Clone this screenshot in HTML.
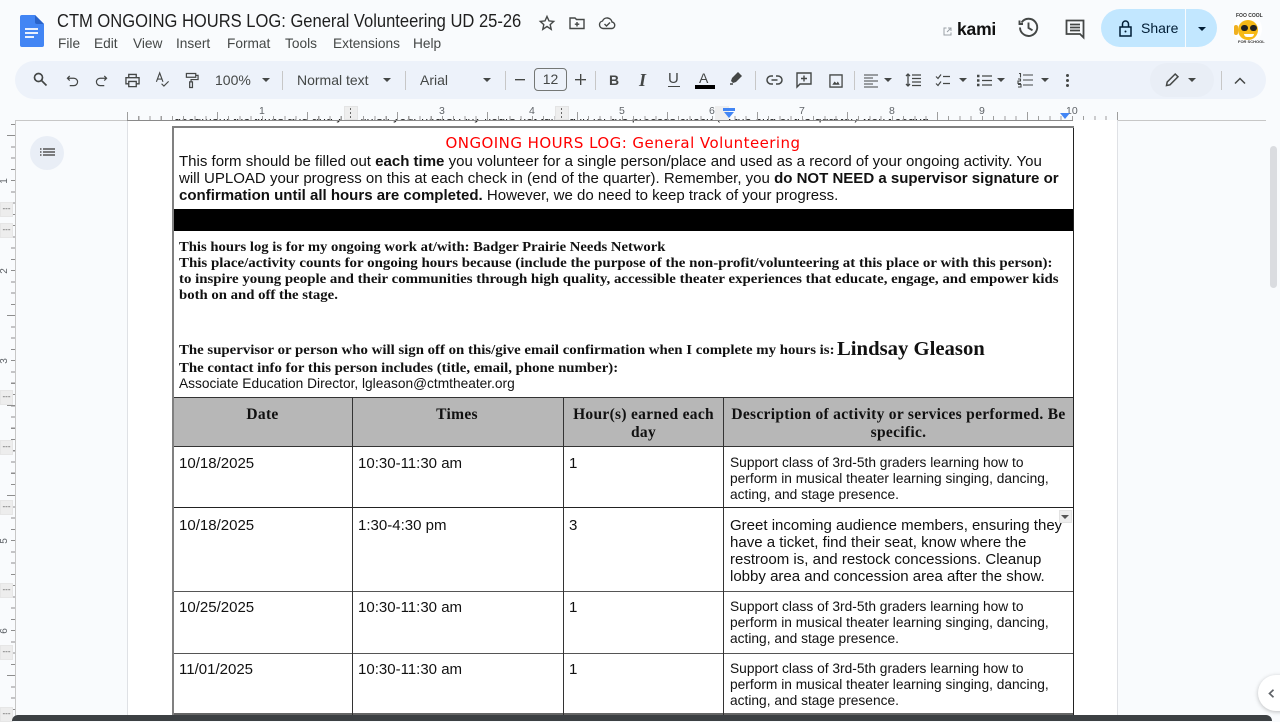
<!DOCTYPE html>
<html><head><meta charset="utf-8"><title>CTM ONGOING HOURS LOG</title>
<style>
*{box-sizing:border-box}
html,body{margin:0;padding:0;width:1280px;height:719px;overflow:hidden;background:#f9fbfd;font-family:"Liberation Sans",sans-serif;color:#000}
body{fill:none;stroke:#444746;stroke-width:1.5}
.a{position:absolute}
.t{position:absolute;white-space:nowrap}
.ui{color:#444746;font-size:13.7px;line-height:18px}
.ic{position:absolute;overflow:visible}
.sep{position:absolute;top:71px;width:1px;height:19px;background:#c7c7c7}
.caret{position:absolute;width:0;height:0;border-left:4px solid transparent;border-right:4px solid transparent;border-top:4px solid #444746}
.d{font-size:15.03px;line-height:17px;color:#111}
.s{font-family:"Liberation Serif",serif;font-weight:bold;font-size:14px;line-height:16px;color:#111;transform-origin:0 0}
.h{font-family:"Liberation Serif",serif;font-weight:bold;font-size:15.5px;line-height:18px;text-align:center;color:#111;letter-spacing:.3px}
.c{font-size:13.75px;line-height:16px;color:#111}
.hl{position:absolute;background:#333}
.rn{position:absolute;font-size:10.5px;color:#5f6368;line-height:12px}
.vh{position:absolute;left:0;width:13px;height:15px;background:#ededed;border:1px solid #e6e6e6;color:#555;font-size:8px;line-height:11px;text-align:center}
.rv{position:absolute;left:0;width:12px;font-size:10px;line-height:12px;color:#5f6368;transform:rotate(-90deg);text-align:center}
</style></head><body>

<!-- Docs logo -->
<svg class="a" style="left:20px;top:15px" width="24" height="32" viewBox="0 0 24 32" stroke="none"><path d="M2 0H15L24 9V30a2 2 0 0 1-2 2H2a2 2 0 0 1-2-2V2a2 2 0 0 1 2-2z" fill="#4285f4"/><path d="M15 0L24 9H17a2 2 0 0 1-2-2z" fill="#2a63c9"/><path d="M5 14h13M5 18h13M5 22h9" stroke="#fff" stroke-width="1.7"/></svg>

<div class="t" style="left:57px;top:10px;font-size:18px;line-height:23px;color:#1f1f1f;transform:scaleX(.919);transform-origin:0 0">CTM ONGOING HOURS LOG: General Volunteering UD 25-26</div>
<svg class="ic" style="left:539px;top:15px" width="16" height="16" viewBox="0 0 16 16" stroke-width="1.400"><path d="M8 1.500l2 4.400 4.700.5-3.500 3.200 1 4.700L8 11.500l-4.200 2.800 1-4.700L1.300 6.400l4.700-.5z"/></svg>
<svg class="ic" style="left:569px;top:16px" width="16" height="14" viewBox="0 0 16 14" stroke-width="1.400"><path d="M1 2h5l1.500 1.500H15V12.500H1zM8 6v4.500M5.800 8.200h4.500"/></svg>
<svg class="ic" style="left:598px;top:16px" width="18" height="14" viewBox="0 0 18 14" stroke-width="1.400"><path d="M5 12.500a3.800 3.800 0 0 1-.5-7.500 5 5 0 0 1 9.500 1 3.300 3.300 0 0 1 0 6.500zM6.500 8l2 2 3.500-3.500"/></svg>

<div class="t ui" style="left:58px;top:35px">File</div>
<div class="t ui" style="left:94px;top:35px">Edit</div>
<div class="t ui" style="left:133px;top:35px">View</div>
<div class="t ui" style="left:176px;top:35px">Insert</div>
<div class="t ui" style="left:227px;top:35px">Format</div>
<div class="t ui" style="left:285px;top:35px">Tools</div>
<div class="t ui" style="left:333px;top:35px">Extensions</div>
<div class="t ui" style="left:413px;top:35px">Help</div>

<!-- top right -->
<svg class="ic" style="left:943px;top:27px" width="9" height="9" viewBox="0 0 9 9" stroke="#9aa0a6" stroke-width="1"><path d="M3.500 1H1V8H8V5.500M5 1H8V4M8 1L4 5"/></svg>
<div class="t" style="left:957px;top:19px;font-size:17.500px;font-weight:bold;line-height:20px;color:#111;letter-spacing:-.2px">kami</div>
<svg class="ic" style="left:1018px;top:17px" width="21" height="21" viewBox="0 0 21 21" stroke-width="1.900"><path d="M3.500 5.500A8.600 8.600 0 1 1 2 10.500M1.500 3.500v3.500h3.500M10.500 5.500v5.500l4 2.300"/></svg>
<svg class="ic" style="left:1065px;top:19px" width="20" height="20" viewBox="0 0 20 20" stroke-width="1.800"><path d="M1.500 1.500h17v17l-3.500-3.500H1.500zM5 5.500h10M5 8.500h10M5 11.500h10"/></svg>
<div class="a" style="left:1101px;top:9px;width:116px;height:38px;border-radius:19px;background:#c2e7ff"></div>
<div class="a" style="left:1185px;top:9px;width:1px;height:38px;background:#f9fbfd"></div>
<svg class="ic" style="left:1118px;top:20px" width="15" height="17" viewBox="0 0 15 17" stroke="#001d35" stroke-width="1.500"><path d="M2 7h11v9H2zM4.500 7V4a3 3 0 0 1 6 0v3"/><circle cx="7.500" cy="11.500" r="1" fill="#001d35" stroke="none"/></svg>
<div class="t" style="left:1141px;top:19px;font-size:14px;line-height:18px;color:#001d35">Share</div>
<div class="caret" style="left:1198px;top:27px;border-top-color:#001d35"></div>
<div class="a" style="left:1233px;top:14px;width:29px;height:30px;border-radius:50%;background:#fff"></div>
<div class="a" style="left:1238px;top:20px;width:20px;height:20px;border-radius:50%;background:#f6b916"></div>
<div class="a" style="left:1241px;top:25px;width:7px;height:6px;border-radius:3px;background:#222"></div>
<div class="a" style="left:1250px;top:25px;width:7px;height:6px;border-radius:3px;background:#222"></div>
<div class="a" style="left:1234px;top:25px;width:4px;height:10px;border-radius:2px;background:#f0b020"></div>
<div class="a" style="left:1244px;top:34px;width:10px;height:3px;border-radius:0 0 5px 5px;background:#fff"></div>
<div class="t" style="left:1236px;top:13px;font-size:5px;line-height:6px;font-weight:bold;color:#333">FOO COOL</div>
<div class="t" style="left:1238px;top:39px;font-size:4px;line-height:5px;font-weight:bold;color:#333">FOR SCHOOL</div>

<!-- toolbar -->
<div class="a" style="left:15px;top:61px;width:1251px;height:38px;border-radius:19px;background:#edf2fa"></div>
<svg class="ic" style="left:33px;top:72px" width="15" height="15" viewBox="0 0 15 15" stroke-width="1.700"><circle cx="5.500" cy="5.500" r="4"/><path d="M8.500 8.500l5 5"/></svg>
<svg class="ic" style="left:66px;top:75px" width="13" height="12" viewBox="0 0 14 13" stroke-width="1.300"><path d="M4 1L1.500 3.500 4 6M2 3.500H8.500a4 4 0 0 1 0 8H4"/></svg>
<svg class="ic" style="left:95px;top:75px" width="13" height="12" viewBox="0 0 14 13" stroke-width="1.300"><path d="M10 1l2.500 2.500L10 6M12 3.500H5.500a4 4 0 0 0 0 8H10"/></svg>
<svg class="ic" style="left:125px;top:73px" width="15" height="15" viewBox="0 0 16 15" stroke-width="1.400"><path d="M4 4V1h8v3M4 11H1V4.500h14V11h-3M4 8.500h8V14H4z"/></svg>
<svg class="ic" style="left:155px;top:71px" width="15" height="17" viewBox="0 0 16 17" stroke-width="1.200"><path d="M1.500 11L5 1.500 8.500 11M2.800 8h4.500M7 13l2.500 2.500 5-5"/></svg>
<svg class="ic" style="left:185px;top:72px" width="14" height="17" viewBox="0 0 15 17" stroke-width="1.300"><path d="M1.500 1h10v4h-10zM11.500 3h2.500v4.500H6.500V10M5 10h3v6H5z"/></svg>
<div class="t ui" style="left:215px;top:71px;font-size:14px">100%</div>
<div class="caret" style="left:262px;top:78px"></div>
<div class="sep" style="left:282px"></div>
<div class="t ui" style="left:297px;top:71px;font-size:14px">Normal text</div>
<div class="caret" style="left:383px;top:78px"></div>
<div class="sep" style="left:405px"></div>
<div class="t ui" style="left:420px;top:71px;font-size:14px">Arial</div>
<div class="caret" style="left:483px;top:78px"></div>
<div class="sep" style="left:505px"></div>
<div class="a" style="left:515px;top:79px;width:10px;height:1px;background:#444746;box-shadow:0 .5px 0 #777"></div>
<div class="a" style="left:534px;top:68px;width:33px;height:23px;border:1px solid #747775;border-radius:4px;color:#444746;font-size:14px;line-height:21px;text-align:center">12</div>
<div class="a" style="left:575px;top:79px;width:11px;height:1px;background:#444746;box-shadow:0 .5px 0 #777"></div>
<div class="a" style="left:580px;top:74px;width:1px;height:11px;background:#444746;box-shadow:.5px 0 0 #777"></div>
<div class="sep" style="left:595px"></div>
<div class="t" style="left:609px;top:71px;font-size:14px;line-height:18px;font-weight:bold;color:#444746">B</div>
<div class="t" style="left:639px;top:70px;font-family:'Liberation Serif',serif;font-size:18px;line-height:20px;font-weight:bold;font-style:italic;color:#444746">I</div>
<div class="t" style="left:668px;top:70px;font-size:15px;line-height:18px;color:#444746">U</div>
<div class="a" style="left:668px;top:86px;width:12px;height:1px;background:#444746"></div>
<div class="t" style="left:699px;top:69px;font-size:14px;line-height:18px;color:#444746">A</div>
<div class="a" style="left:695px;top:85px;width:20px;height:4px;background:#000"></div>
<svg class="a" style="left:729px;top:70px" width="16" height="15" viewBox="0 0 16 15"><path d="M2 11l1-3 6-6 4 4-6 6-3 1z" fill="#444746" stroke="none"/><path d="M1 14h3" stroke="#444746"/></svg>
<div class="sep" style="left:755px"></div>
<svg class="ic" style="left:766px;top:75px" width="17" height="10" viewBox="0 0 17 10"><path d="M7 1H5a4 4 0 0 0 0 8h2M10 1h2a4 4 0 0 1 0 8h-2M5.500 5h6"/></svg>
<svg class="ic" style="left:796px;top:72px" width="16" height="16" viewBox="0 0 16 16" stroke-width="1.400"><path d="M1 1h14v11H4l-3 3zM8 3.500v6M5 6.500h6"/></svg>
<svg class="ic" style="left:829px;top:74px" width="14" height="14" viewBox="0 0 15 15" stroke-width="1.400"><path d="M1 1h13v13H1z"/><path d="M3.500 11.500L6 8l2 2 1.500-2 2 3.500z" fill="#444746" stroke="none"/></svg>
<div class="sep" style="left:854px"></div>
<svg class="ic" style="left:864px;top:74px" width="14" height="13" viewBox="0 0 14 13" stroke-width="1.100"><path d="M0 1h14M0 4h9M0 7h14M0 10h9M0 13h14"/></svg>
<div class="caret" style="left:884px;top:78px"></div>
<svg class="ic" style="left:905px;top:73px" width="16" height="14" viewBox="0 0 16 14" stroke-width="1.300"><path d="M7 2h9M7 5.500h9M7 9h9M7 12.500h9M3 1v12M1 3l2-2 2 2M1 11l2 2 2-2"/></svg>
<svg class="ic" style="left:935px;top:73px" width="15" height="14" viewBox="0 0 15 14" stroke-width="1.200"><path d="M1 3.500l2 2 3-4M1 10.500l2 2 3-4M8 3.500h7M8 10.500h7"/></svg>
<div class="caret" style="left:959px;top:78px"></div>
<svg class="ic" style="left:977px;top:74px" width="15" height="13" viewBox="0 0 15 13" stroke-width="1.200"><path d="M5 2h10M5 6.500h10M5 11h10"/><path d="M0 2h2.500M0 6.500h2.500M0 11h2.500" stroke-width="2.500"/></svg>
<div class="caret" style="left:997px;top:78px"></div>
<svg class="ic" style="left:1018px;top:73px" width="15" height="14" viewBox="0 0 15 14" stroke-width="1.100"><path d="M5 2h10M5 7h10M5 12h10M1 .5h1.500v4M0 6h2.500v2H0v2.500h3M0 11.500h3v2.500H0"/></svg>
<div class="caret" style="left:1041px;top:78px"></div>
<div class="a" style="left:1066px;top:74px;width:3px;height:3px;border-radius:50%;background:#444746;box-shadow:0 5px 0 #444746,0 10px 0 #444746"></div>
<div class="a" style="left:1150px;top:63px;width:64px;height:34px;border-radius:17px;background:#e9eef6"></div>
<svg class="ic" style="left:1165px;top:72px" width="15" height="15" viewBox="0 0 15 15"><path d="M1.500 13.500l.7-3.500 8-8 2.800 2.800-8 8z"/></svg>
<div class="caret" style="left:1188px;top:78px"></div>
<div class="sep" style="left:1221px"></div>
<svg class="ic" style="left:1234px;top:77px" width="12" height="8" viewBox="0 0 12 8" stroke-width="1.500"><path d="M1 6.500l5-5 5 5"/></svg>

<!-- document area -->
<div class="a" style="left:127px;top:120px;width:991px;height:600px;background:#fff;border-left:1px solid #dfe1e5;border-right:1px solid #dfe1e5"></div>
<div class="a" style="left:15px;top:120px;width:1px;height:600px;background:#c7c7c7"></div>
<div class="a" style="left:15px;top:120px;width:112px;height:1px;background:#c7c7c7"></div>
<div class="a" style="left:1118px;top:120px;width:148px;height:1px;background:#c7c7c7"></div>
<div class="a" style="left:30px;top:136px;width:34px;height:34px;border-radius:50%;background:#e9eef6"></div>
<svg class="ic" style="left:40px;top:148px" width="15" height="10" viewBox="0 0 15 10" stroke-width="1.400" stroke="#555"><path d="M3 1h12M3 4h12M3 7h12M0 1h1.500M0 4h1.500M0 7h1.500"/></svg>

<!-- clipped text under ruler -->
<div class="a" style="left:127px;top:119px;width:990px;height:5px;overflow:hidden"><div class="t" style="left:47px;top:-11px;font-size:12.6px;line-height:17px;color:#222">document the times and and you finish your hours! Any hours not turned in for the process check (at the end of the quarter) won't count.</div></div>

<!-- ruler top -->
<div class="a" style="left:127px;top:116px;width:991px;height:4px;background:repeating-linear-gradient(90deg,#9e9e9e 0 1px,transparent 1px 11.25px)"></div>
<div class="a" style="left:127px;top:112px;width:991px;height:8px;background:repeating-linear-gradient(90deg,#9e9e9e 0 1px,transparent 1px 90px)"></div>
<div class="a" style="left:127px;top:120px;width:946px;height:1px;background:#8a8a8a"></div>
<div class="rn" style="left:259px;top:105px">1</div>
<div class="rn" style="left:439px;top:105px">3</div>
<div class="rn" style="left:529px;top:105px">4</div>
<div class="rn" style="left:619px;top:105px">5</div>
<div class="rn" style="left:709px;top:105px">6</div>
<div class="rn" style="left:799px;top:105px">7</div>
<div class="rn" style="left:889px;top:105px">8</div>
<div class="rn" style="left:979px;top:105px">9</div>
<div class="rn" style="left:1066px;top:105px">10</div>
<div class="a" style="left:344px;top:106px;width:14px;height:14px;background:#eee;border:1px solid #e4e4e4"></div>
<div class="a" style="left:350px;top:108px;width:1px;height:10px;background:repeating-linear-gradient(#666 0 2px,transparent 2px 4px)"></div>
<div class="a" style="left:555px;top:106px;width:14px;height:14px;background:#eee;border:1px solid #e4e4e4"></div>
<div class="a" style="left:561px;top:108px;width:1px;height:10px;background:repeating-linear-gradient(#666 0 2px,transparent 2px 4px)"></div>
<div class="a" style="left:715px;top:106px;width:14px;height:14px;background:#eee"></div>
<div class="a" style="left:723px;top:108px;width:12px;height:3px;background:#4285f4"></div>
<div class="a" style="left:724px;top:112px;width:0;height:0;border-left:5px solid transparent;border-right:5px solid transparent;border-top:6px solid #4285f4"></div>
<div class="a" style="left:1060px;top:113px;width:0;height:0;border-left:5px solid transparent;border-right:5px solid transparent;border-top:6px solid #4285f4"></div>

<!-- ruler left -->
<div class="a" style="left:11px;top:124px;width:4px;height:591px;background:repeating-linear-gradient(180deg,#8e8e8e 0 1px,transparent 1px 11.25px)"></div>
<div class="a" style="left:7px;top:135px;width:8px;height:580px;background:repeating-linear-gradient(180deg,#8e8e8e 0 1px,transparent 1px 90px)"></div>
<div class="rv" style="left:-1px;top:175px">1</div>
<div class="rv" style="left:-1px;top:265px">2</div>
<div class="rv" style="left:-1px;top:355px">3</div>
<div class="rv" style="left:-1px;top:535px">5</div>
<div class="rv" style="left:-1px;top:625px">6</div>
<div class="vh" style="top:202px">---</div>
<div class="vh" style="top:223px">---</div>
<div class="vh" style="top:390px">---</div>
<div class="vh" style="top:440px">---</div>
<div class="vh" style="top:500px">---</div>
<div class="vh" style="top:583px">---</div>
<div class="vh" style="top:645px">---</div>
<div class="vh" style="top:707px">---</div>

<!-- document table -->
<div class="a" style="left:173px;top:209px;width:900px;height:22px;background:#000"></div>
<div class="a" style="left:173px;top:397px;width:900px;height:50px;background:#b7b7b7"></div>

<div class="hl" style="left:172px;top:126px;width:2px;height:590px;background:#808080"></div>
<div class="hl" style="left:1073px;top:127px;width:1px;height:589px;background:#222"></div>
<div class="hl" style="left:172px;top:126px;width:902px;height:2px;background:#808080"></div>
<div class="hl" style="left:174px;top:397px;width:899px;height:1px"></div>
<div class="hl" style="left:174px;top:446px;width:899px;height:1px"></div>
<div class="hl" style="left:174px;top:507px;width:899px;height:1px;background:#222"></div>
<div class="hl" style="left:174px;top:591px;width:899px;height:1px;background:#555"></div>
<div class="hl" style="left:174px;top:653px;width:899px;height:1px;background:#555"></div>
<div class="hl" style="left:174px;top:713px;width:899px;height:2px;background:#666"></div>
<div class="hl" style="left:352px;top:397px;width:1px;height:318px"></div>
<div class="hl" style="left:563px;top:397px;width:1px;height:318px"></div>
<div class="hl" style="left:723px;top:397px;width:1px;height:318px"></div>

<div class="t" style="left:173px;top:134px;width:900px;text-align:center;font-family:'DejaVu Sans',sans-serif;font-size:15px;line-height:18px;color:#f00;letter-spacing:.45px">ONGOING HOURS LOG: General Volunteering</div>
<div class="t d" style="left:179px;top:153px">This form should be filled out <b>each time</b> you volunteer for a single person/place and used as a record of your ongoing activity. You</div>
<div class="t d" style="left:179px;top:170px">will UPLOAD your progress on this at each check in (end of the quarter). Remember, you <b>do NOT NEED a supervisor signature or</b></div>
<div class="t d" style="left:179px;top:187px"><b>confirmation until all hours are completed.</b> However, we do need to keep track of your progress.</div>

<div class="t s" style="left:179px;top:240px;transform:scaleX(1.047)">This hours log is for my ongoing work at/with: Badger Prairie Needs Network</div>
<div class="t s" style="left:179px;top:256px;transform:scaleX(1.067)">This place/activity counts for ongoing hours because (include the purpose of the non-profit/volunteering at this place or with this person):</div>
<div class="t s" style="left:179px;top:272px;transform:scaleX(1.062)">to inspire young people and their communities through high quality, accessible theater experiences that educate, engage, and empower kids</div>
<div class="t s" style="left:179px;top:288px;transform:scaleX(1.053)">both on and off the stage.</div>
<div class="t s" style="left:179px;top:343px;transform:scaleX(1.059)">The supervisor or person who will sign off on this/give email confirmation when I complete my hours is:</div>
<div class="t s" style="left:837px;top:338px;font-size:20px;line-height:22px;transform:scaleX(1.035)">Lindsay Gleason</div>
<div class="t s" style="left:179px;top:361px;transform:scaleX(1.058)">The contact info for this person includes (title, email, phone number):</div>
<div class="t" style="left:179px;top:375px;font-size:13.73px;line-height:17px;color:#111">Associate Education Director, lgleason@ctmtheater.org</div>

<div class="t h" style="left:173px;top:406px;width:179px">Date</div>
<div class="t h" style="left:353px;top:406px;width:208px">Times</div>
<div class="t h" style="left:564px;top:406px;width:159px">Hour(s) earned each<br>day</div>
<div class="t h" style="left:724px;top:406px;width:349px">Description of activity or services performed. Be<br>specific.</div>

<div class="t d" style="left:179px;top:455px">10/18/2025</div><div class="t d" style="left:358px;top:455px">10:30-11:30 am</div><div class="t d" style="left:569px;top:455px">1</div>
<div class="t c" style="left:730px;top:455px">Support class of 3rd-5th graders learning how to<br>perform in musical theater learning singing, dancing,<br>acting, and stage presence.</div>

<div class="t d" style="left:179px;top:517px">10/18/2025</div><div class="t d" style="left:358px;top:517px">1:30-4:30 pm</div><div class="t d" style="left:569px;top:517px">3</div>
<div class="t d" style="left:730px;top:517px">Greet incoming audience members, ensuring they<br>have a ticket, find their seat, know where the<br>restroom is, and restock concessions. Cleanup<br>lobby area and concession area after the show.</div>
<div class="a" style="left:1059px;top:510px;width:13px;height:13px;background:#eee;border:1px solid #e2e2e2"></div>
<div class="caret" style="left:1061px;top:515px;border-top-color:#555"></div>

<div class="t d" style="left:179px;top:599px">10/25/2025</div><div class="t d" style="left:358px;top:599px">10:30-11:30 am</div><div class="t d" style="left:569px;top:599px">1</div>
<div class="t c" style="left:730px;top:599px">Support class of 3rd-5th graders learning how to<br>perform in musical theater learning singing, dancing,<br>acting, and stage presence.</div>

<div class="t d" style="left:179px;top:661px">11/01/2025</div><div class="t d" style="left:358px;top:661px">10:30-11:30 am</div><div class="t d" style="left:569px;top:661px">1</div>
<div class="t c" style="left:730px;top:661px">Support class of 3rd-5th graders learning how to<br>perform in musical theater learning singing, dancing,<br>acting, and stage presence.</div>

<!-- scrollbar + side toggle -->
<div class="a" style="left:1270px;top:146px;width:7px;height:142px;border-radius:4px;background:#dadce0"></div>
<div class="a" style="left:1258px;top:675px;width:40px;height:36px;border-radius:18px;background:#fff;box-shadow:0 1px 4px rgba(0,0,0,.25)"></div>
<svg class="ic" style="left:1268px;top:689px" width="7" height="9" viewBox="0 0 7 9" stroke="#5f6368" stroke-width="1.700"><path d="M5.500 .8L1.500 4.500l4 3.700"/></svg>

<!-- bottom dark bar -->
<div class="a" style="left:12px;top:715px;width:1260px;height:6px;background:#3c4043;border-radius:6px 6px 0 0"></div>
</body></html>
